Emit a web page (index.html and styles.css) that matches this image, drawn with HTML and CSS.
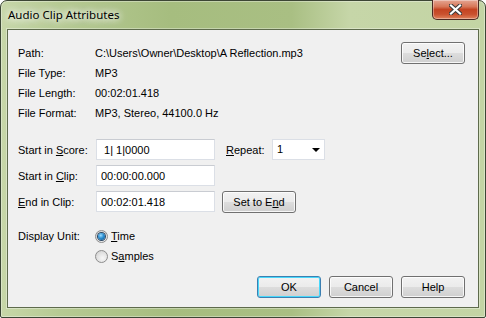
FILE: index.html
```html
<!DOCTYPE html>
<html lang="en">

<head>
  <meta charset="UTF-8">
  <title>Audio Clip Attributes</title>
  <link rel="stylesheet" href="styles.css">
</head>

<body>
  <div class="window">
    <div class="titlebar">
      <span class="title">Audio Clip Attributes</span>
      <button type="button" class="close">
        <svg width="13" height="11" viewBox="0 0 13 11">
          <path d="M2 1.5 L11 9.5 M11 1.5 L2 9.5" stroke="#3b3b3b" stroke-width="4.2" stroke-linecap="square" fill="none" />
          <path d="M2 1.5 L11 9.5 M11 1.5 L2 9.5" stroke="#ffffff" stroke-width="2.2" stroke-linecap="square" fill="none" />
        </svg>
      </button>
    </div>

    <div class="client">
      <div class="info">
        <div class="info-grid">
          <span>Path:</span><span>C:\Users\Owner\Desktop\A Reflection.mp3</span>
          <span>File Type:</span><span>MP3</span>
          <span>File Length:</span><span>00:02:01.418</span>
          <span>File Format:</span><span>MP3, Stereo, 44100.0 Hz</span>
        </div>
        <button type="button" class="btn select">Se<u>l</u>ect...</button>
      </div>

      <div class="fields">
        <span>Start in <u>S</u>core:</span>
        <input type="text" class="field" value=" 1| 1|0000" readonly>
        <div class="repeat">
          <span><u>R</u>epeat:</span>
          <div class="combo">1<span class="arrow"></span></div>
        </div>

        <span>Start in <u>C</u>lip:</span>
        <input type="text" class="field" value="00:00:00.000" readonly>
        <div></div>

        <span><u>E</u>nd in Clip:</span>
        <input type="text" class="field" value="00:02:01.418" readonly>
        <button type="button" class="btn set-end">Set to E<u>n</u>d</button>
      </div>

      <div class="units">
        <span class="units-label">Display Unit:</span>
        <div class="radios">
          <label class="radio checked"><span class="dot"></span><span><u>T</u>ime</span></label>
          <label class="radio"><span class="dot"></span><span>S<u>a</u>mples</span></label>
        </div>
      </div>

      <div class="actions">
        <button type="button" class="btn default">OK</button>
        <button type="button" class="btn">Cancel</button>
        <button type="button" class="btn">Help</button>
      </div>
    </div>
  </div>
</body>

</html>
```

FILE: styles.css
```css
html,
body {
  margin: 0;
  padding: 0;
  background-color: #ffffff;
}

.window {
  width: 486px;
  height: 318px;
  box-sizing: border-box;
  border: 1px solid #3c4634;
  border-radius: 7px 7px 2px 2px;
  padding: 0 6px 9px 6px;
  display: flex;
  flex-direction: column;
  background: linear-gradient(to right, #c7d7a8 0%, #b6ca93 12%, #a6bd7f 35%, #a9bf83 60%, #c6d6a8 72%, #c3d4a4 100%);
  box-shadow: inset 0 0 0 1px rgba(255, 255, 255, .35);
  font-family: "Liberation Sans", Arial, sans-serif;
  font-size: 11px;
  color: #000000;
}

/* title bar */
.titlebar {
  height: 28px;
  display: flex;
  align-items: flex-start;
}

.titlebar .title {
  margin: 5px 0 0 1px;
  font-family: "Noto Sans", sans-serif;
  font-size: 11.5px;
  line-height: 17px;
  color: #000000;
  text-shadow: 0 0 6px #ffffff, 0 0 10px #ffffff, 0 0 14px rgba(255, 255, 255, .8);
}

.titlebar .close {
  margin: -1px 0 0 auto;
  width: 47px;
  height: 20px;
  padding: 0;
  border: 1px solid #4a2a22;
  border-top: none;
  border-radius: 0 0 5px 5px;
  background: linear-gradient(#e5a693 0%, #d77758 35%, #c44422 50%, #c9512e 75%, #e0835c 100%);
  box-shadow: inset 0 0 0 1px rgba(255, 255, 255, .35);
  display: flex;
  align-items: center;
  justify-content: center;
}

/* client area */
.client {
  flex: 1;
  display: flex;
  flex-direction: column;
  padding: 13px 13px 9px 10px;
  background-color: #f0f0f0;
  border: 1px solid #5e6b4c;
  box-shadow: 0 0 0 1px rgba(255, 255, 255, .35);
}

.info {
  display: flex;
  align-items: flex-start;
}

.info-grid {
  flex: 1;
  display: grid;
  grid-template-columns: 77px auto;
  grid-auto-rows: 20px;
  align-items: center;
}

.btn {
  width: 64px;
  height: 22px;
  padding: 0;
  font-family: "Liberation Sans", Arial, sans-serif;
  font-size: 11px;
  color: #000000;
  border: 1px solid #707070;
  border-radius: 3px;
  background: linear-gradient(#f2f2f2 0%, #ebebeb 49%, #dddddd 50%, #cfcfcf 100%);
  box-shadow: inset 0 0 0 1px rgba(255, 255, 255, .8);
}

.btn.select {
  margin-top: -1px;
}

.btn.default {
  border-color: #3c7fb1;
  box-shadow: inset 0 0 0 1px #48d8fb;
}

/* start / end fields */
.fields {
  margin-top: 16px;
  display: grid;
  grid-template-columns: 78px 119px auto;
  grid-auto-rows: 21px;
  row-gap: 5px;
  align-items: center;
}

.field {
  width: 119px;
  height: 21px;
  box-sizing: border-box;
  margin: 0;
  padding: 0 0 0 4px;
  border: 1px solid #dbdfe6;
  border-top-color: #c9ccd2;
  background-color: #ffffff;
  font-family: "Liberation Sans", Arial, sans-serif;
  font-size: 11px;
  color: #000000;
  white-space: pre;
  outline: none;
}

.repeat {
  display: flex;
  align-items: center;
  padding-left: 11px;
}

.repeat > span {
  width: 46px;
}

.combo {
  position: relative;
  width: 53px;
  height: 21px;
  box-sizing: border-box;
  padding-left: 4px;
  line-height: 19px;
  border: 1px solid #dbdfe6;
  background-color: #ffffff;
}

.combo .arrow {
  position: absolute;
  right: 4px;
  top: 8px;
  border-left: 4px solid transparent;
  border-right: 4px solid transparent;
  border-top: 4px solid #000000;
}

.btn.set-end {
  margin-left: 7px;
  width: 74px;
  justify-self: start;
}

/* display unit */
.units {
  margin-top: 14px;
  display: flex;
  align-items: flex-start;
}

.units-label {
  width: 77px;
  line-height: 20px;
}

.radios {
  display: flex;
  flex-direction: column;
}

.radio {
  height: 20px;
  display: flex;
  align-items: center;
  gap: 3px;
}

.radio .dot {
  width: 13px;
  height: 13px;
  box-sizing: border-box;
  border: 1px solid #8d8d8d;
  border-radius: 50%;
  background: radial-gradient(circle at 60% 65%, #f7f7f7 0%, #e3e3e3 50%, #c9c9c9 100%);
  display: flex;
  align-items: center;
  justify-content: center;
}

.radio.checked .dot::after {
  content: "";
  width: 7px;
  height: 7px;
  border-radius: 50%;
  background: radial-gradient(circle at 40% 35%, #9fdcff 0%, #2b8fd1 45%, #0d4a82 100%);
  box-shadow: 0 0 0 1px #2b4763;
}

/* dialog buttons */
.actions {
  margin-top: auto;
  display: flex;
  justify-content: flex-end;
  gap: 8px;
}
```
